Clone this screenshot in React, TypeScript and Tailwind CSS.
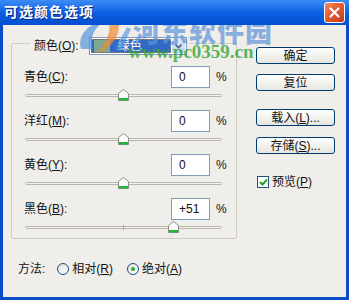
import React from "react";

const font = "font-['Liberation_Sans','Noto_Sans_CJK_SC',sans-serif]";

const rows = [
  { label: "青色", key: "C", value: "0", pct: 0 },
  { label: "洋红", key: "M", value: "0", pct: 0 },
  { label: "黄色", key: "Y", value: "0", pct: 0 },
  { label: "黑色", key: "B", value: "+51", pct: 51 },
];

function Thumb() {
  return (
    <svg width="11" height="12" viewBox="0 0 11 12">
      <path d="M5.5 0.5 L10.5 4.5 L10.5 11.5 L0.5 11.5 L0.5 4.5 Z" fill="#fbfbf8" stroke="#8a8f8a" />
      <rect x="1" y="9" width="9" height="2.5" fill="#22b53a" />
    </svg>
  );
}

function Slider({ pct, tick }: { pct: number; tick?: boolean }) {
  const left = ((pct + 100) / 200) * 197;
  return (
    <div className="relative h-[12px] w-[197px]">
      <div className="absolute left-0 right-0 top-[5px] h-[3px] rounded-full border border-[#b8b6a8] bg-[#f4f3ee]" />
      {tick && <div className="absolute left-[98px] top-[4px] h-[5px] w-px bg-[#a9a79a]" />}
      <div className="absolute top-0" style={{ left: left - 5.5 }}>
        <Thumb />
      </div>
    </div>
  );
}

function Btn({ children }: { children: React.ReactNode }) {
  return (
    <div className="flex h-[17px] w-[79px] items-center justify-center rounded-[3px] border border-[#003c74] bg-gradient-to-b from-white to-[#e6e5df] text-[12px] text-[#111]">
      {children}
    </div>
  );
}

function U({ c }: { c: string }) {
  return <span className="underline underline-offset-1">{c}</span>;
}

export default function App() {
  return (
    <div className={`relative flex h-[300px] w-[349px] flex-col overflow-hidden ${font}`}>
      {/* title bar */}
      <div className="flex h-[25px] shrink-0 items-center justify-between bg-gradient-to-b from-[#3c8cf4] via-[#0b5fe4] to-[#0450d0] pl-[4px] pr-[4px]">
        <span className="text-[14px] font-bold tracking-[1px] text-white [text-shadow:1px_1px_0_#0a2a80]">可选颜色选项</span>
        <div className="flex h-[21px] w-[21px] items-center justify-center rounded-[3px] border border-white bg-gradient-to-br from-[#f08a64] via-[#e2572e] to-[#c23a16]">
          <svg width="11" height="11" viewBox="0 0 11 11">
            <path d="M1.5 1.5 L9.5 9.5 M9.5 1.5 L1.5 9.5" stroke="white" strokeWidth="2.2" strokeLinecap="round" />
          </svg>
        </div>
      </div>

      {/* body */}
      <div className="relative flex flex-1 flex-col overflow-hidden border-x-[3px] border-b-[3px] border-[#0a4bc8] bg-[#efeeea]">
        <div className="flex">
          {/* group box */}
          <div className="relative ml-[8px] mt-[18px] h-[196px] w-[226px] rounded-[2px] border border-[#cfccc0] px-[13px] pt-[22px]">
            <div className="absolute left-[18px] top-[-7px] flex h-[18px] items-center gap-[10px] bg-[#efeeea] pl-[4px] pr-[2px] text-[12px] text-[#111]">
              <span>颜色(<U c="O" />):</span>
              <div className="flex h-[18px] w-[98px] items-center border border-[#7f9db9] bg-white">
                <div className="m-[1px] flex h-[14px] flex-1 items-center border border-dotted border-[#888] bg-[#316ac5]">
                  <div className="ml-[2px] h-[12px] w-[16px] bg-[#80a890]" />
                  <span className="ml-[8px] text-[12px] leading-none text-white">绿色</span>
                </div>
                <div className="mr-[1px] flex h-[14px] w-[13px] items-center justify-center rounded-[2px] bg-gradient-to-b from-[#e4ecfd] to-[#bfd0f6]">
                  <svg width="7" height="5" viewBox="0 0 7 5">
                    <path d="M0.5 0.5 L3.5 3.5 L6.5 0.5" fill="none" stroke="#4d6185" strokeWidth="1.6" />
                  </svg>
                </div>
              </div>
            </div>

            {rows.map((r, i) => (
              <div key={r.key} className={i < 3 ? "mb-[9px]" : ""}>
                <div className="mr-[-3px] flex h-[22px] items-center justify-between">
                  <span className="-ml-px text-[12px] text-[#111]">
                    {r.label}(<U c={r.key} />):
                  </span>
                  <div className="flex items-center gap-[6px]">
                    <div className="flex h-[22px] w-[39px] items-center border border-[#7f9db9] bg-white pl-[7px] text-[12px] text-[#111]">
                      {r.value}
                    </div>
                    <span className="w-[10px] text-[12px] text-[#111]">%</span>
                  </div>
                </div>
                <div className="mt-px">
                  <Slider pct={r.pct} tick={i === 3} />
                </div>
              </div>
            ))}
          </div>

          {/* buttons */}
          <div className="ml-[19px] mt-[22px] flex flex-col">
            <Btn>确定</Btn>
            <div className="mt-[10px]"><Btn>复位</Btn></div>
            <div className="mt-[18px]"><Btn>载入(<U c="L" />)...</Btn></div>
            <div className="mt-[11px]"><Btn>存储(<U c="S" />)...</Btn></div>
            <div className="mt-[19px] flex items-center gap-[3px] pl-px text-[12px] text-[#111]">
              <div className="flex h-[12px] w-[12px] items-center justify-center border border-[#1c5180] bg-white">
                <svg width="9" height="8" viewBox="0 0 9 8">
                  <path d="M1 4 L3.5 6.5 L8 1.5" fill="none" stroke="#21a121" strokeWidth="2" />
                </svg>
              </div>
              <span>预览(<U c="P" />)</span>
            </div>
          </div>
        </div>

        {/* method */}
        <div className="ml-[15px] mt-[22px] flex h-[16px] items-center text-[12px] text-[#111]">
          <span>方法:</span>
          <div className="ml-[12px] h-[12px] w-[12px] rounded-full border border-[#1c5180] bg-gradient-to-br from-[#e0e0da] to-white" />
          <span className="ml-[3px]">相对(<U c="R" />)</span>
          <div className="ml-[14px] flex h-[12px] w-[12px] items-center justify-center rounded-full border border-[#1c5180] bg-gradient-to-br from-[#e0e0da] to-white">
            <div className="h-[4px] w-[4px] rounded-full bg-[#2bb52b]" />
          </div>
          <span className="ml-[3px]">绝对(<U c="A" />)</span>
        </div>

        {/* watermark */}
        <svg className="pointer-events-none absolute left-[72px] top-[-6px]" width="56" height="36" viewBox="0 0 56 36">
          <path d="M6 30 C2 18 12 4 30 2 C20 8 14 18 18 30 Z" fill="#4a8fdc" opacity="0.65" />
          <path d="M22 34 C30 26 36 14 34 4 L44 6 C44 18 36 30 22 34 Z" fill="#f08a30" opacity="0.7" />
          <path d="M40 30 L52 8 L56 10 L46 32 Z" fill="#4a8fdc" opacity="0.6" />
        </svg>
        <span className="pointer-events-none absolute left-[130px] top-[-9px] font-['Noto_Sans_CJK_SC',serif] text-[27px] font-black leading-[30px] tracking-[1px] text-[#5d93d8] opacity-70">河东软件园</span>
        <span className="pointer-events-none absolute left-[125px] top-[17px] font-['Liberation_Serif',serif] text-[19px] font-bold leading-[20px] text-[#3aa53a] opacity-80">www.pc0359.cn</span>
      </div>
    </div>
  );
}
